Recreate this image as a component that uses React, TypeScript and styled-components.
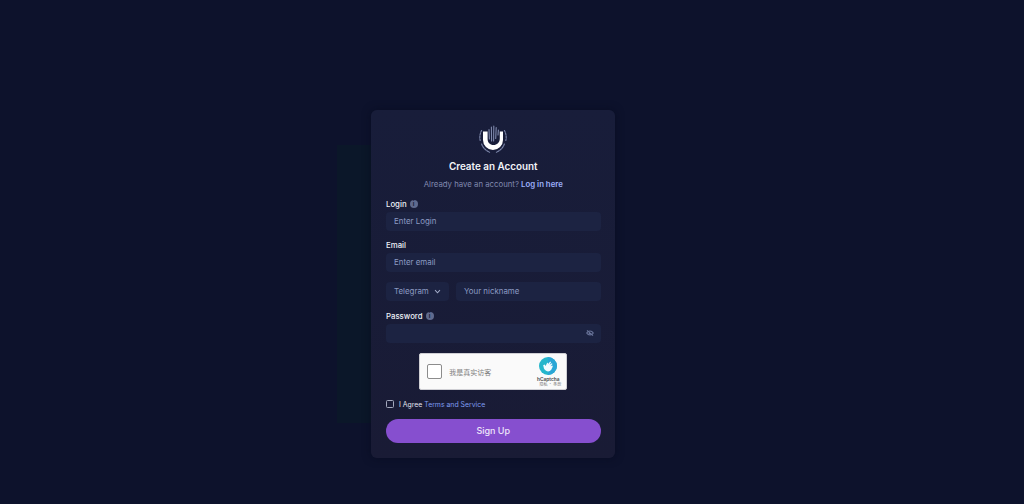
import React, { ReactElement } from 'react'
import styled, { createGlobalStyle } from 'styled-components'

const GlobalStyle = createGlobalStyle`
  html, body {
    margin: 0;
    padding: 0;
    height: 100%;
    background: #0d122c;
  }
  * {
    box-sizing: border-box;
  }
`

const Page = styled.div`
  position: relative;
  height: 504px;
  overflow: hidden;
  display: flex;
  justify-content: center;
  align-items: flex-start;
  padding: 110px 38px 0 0;
  font-family: Inter, 'Noto Sans', sans-serif;
`

const Glow = styled.div`
  position: absolute;
  left: 337px;
  top: 145px;
  width: 120px;
  height: 278px;
  background: #0b1729;
`

const Card = styled.div`
  position: relative;
  width: 244px;
  height: 348px;
  padding: 14px 14.5px 0 15px;
  background: linear-gradient(180deg, #181d3a 0%, #191b35 100%);
  border-radius: 6px;
  box-shadow: 0 0 8px rgb(6 9 28 / 55%);
  display: flex;
  flex-direction: column;
`

const LogoWrap = styled.div`
  display: flex;
  justify-content: center;
  height: 30px;
`

const Title = styled.h1`
  margin: 5px 0 0;
  font-size: 9.9px;
  line-height: 14px;
  font-weight: 600;
  color: #f2f3f8;
  text-align: center;
`

const Subtitle = styled.p`
  margin: 5px 0 0;
  font-size: 7.8px;
  line-height: 12px;
  color: #8089ae;
  text-align: center;
`

const Link = styled.a<{ $bold?: boolean }>`
  color: ${p => (p.$bold ? '#9cb0fa' : '#7f9cf0')};
  font-weight: ${p => (p.$bold ? 600 : 400)};
  text-decoration: none;
`

const Field = styled.div<{ $top: number }>`
  margin-top: ${p => p.$top}px;
`

const Label = styled.div`
  display: flex;
  align-items: center;
  gap: 3px;
  height: 11px;
  margin-bottom: 2px;
  font-size: 7.8px;
  font-weight: 500;
  color: #eef0f7;
`

const InfoDot = styled.span`
  width: 8px;
  height: 8px;
  border-radius: 50%;
  background: #5f6a8e;
  color: #181c38;
  font-size: 6px;
  font-weight: 700;
  line-height: 8px;
  text-align: center;
`

const Input = styled.div<{ $width?: number }>`
  flex: ${p => (p.$width ? `0 0 ${p.$width}px` : '1 1 auto')};
  height: 19.5px;
  padding: 0 8px;
  display: flex;
  align-items: center;
  justify-content: space-between;
  background: #1c2342;
  border-radius: 4px;
  font-size: 7.9px;
  color: #8d9bc2;
`

const EyeSlot = styled.span`
  display: flex;
  margin-right: -1px;
`

const ContactRow = styled.div`
  display: flex;
  gap: 7px;
  margin-top: 9.5px;
`

const CaptchaRow = styled.div`
  display: flex;
  justify-content: center;
  margin-top: 10px;
`

const Captcha = styled.div`
  width: 148px;
  height: 37px;
  padding: 0 5px 0 7px;
  display: flex;
  align-items: center;
  background: #fafafa;
  border: 1px solid #cfcfd4;
  border-radius: 2px;
`

const CaptchaBox = styled.div`
  width: 15px;
  height: 15px;
  background: #fff;
  border: 1px solid #8c8c8c;
  border-radius: 2px;
`

const CaptchaText = styled.span`
  margin-left: 7px;
  flex: 1;
  font-family: 'Noto Sans CJK SC', sans-serif;
  font-size: 7px;
  color: #808080;
`

const CaptchaBrand = styled.div`
  display: flex;
  flex-direction: column;
  align-items: center;
  width: 26px;
`

const BrandName = styled.span`
  margin-top: 1px;
  font-size: 4.8px;
  line-height: 6px;
  font-weight: 600;
  color: #444;
`

const BrandLinks = styled.span`
  align-self: flex-end;
  font-family: 'Noto Sans CJK SC', sans-serif;
  font-size: 4px;
  line-height: 5px;
  color: #777;
`

const AgreeRow = styled.label`
  display: flex;
  align-items: center;
  gap: 5px;
  margin-top: 8.5px;
  height: 11px;
  font-size: 6.9px;
  font-weight: 400;
  color: #e0e2ee;
`

const Check = styled.span`
  width: 8px;
  height: 8px;
  border: 1px solid #a4a9bd;
  border-radius: 1.5px;
`

const SubmitButton = styled.button`
  margin-top: 9.5px;
  width: 100%;
  height: 23.5px;
  padding: 0;
  border: none;
  border-radius: 12px;
  background: #864fcf;
  color: #eee6fa;
  font-family: inherit;
  font-size: 9px;
  font-weight: 500;
`

const Logo = (): ReactElement => (
  <svg width='30' height='30' viewBox='0 0 30 30' fill='none'>
    <g stroke='#7f89ad' strokeWidth='1.1' strokeLinecap='round'>
      <path d='M11 5.5 11.4 15M13.4 3l.2 14M15.8 2l-.2 15M18.2 3.5l-.5 11M20.4 6l-.4 5' />
      <path
        d='M3.6 6.5a14 14 0 0 0-1.4 10M26.4 6.5a14 14 0 0 1 1.4 10M3.6 20a14 14 0 0 0 8 8.2M26.4 20a14 14 0 0 1-8 8.2'
        strokeDasharray='1.8 1.1'
      />
    </g>
    <path
      d='M5 7.5V16a10 10 0 0 0 20 0V7.5h-3.2v7C21.8 18.5 19 21 15.5 21 12 21 9.6 18.5 9.6 15V7.5z'
      fill='#fff'
    />
  </svg>
)

const EyeOff = (): ReactElement => (
  <svg width='8' height='8' viewBox='0 0 24 24' fill='none' stroke='#69749a' strokeWidth='3.2'>
    <path d='M2 12s4-6 10-6 10 6 10 6-4 6-10 6-10-6-10-6z' />
    <path d='M3 4l18 16M9 12a3 3 0 0 0 6 0' />
  </svg>
)

const Chevron = (): ReactElement => (
  <svg width='7' height='7' viewBox='0 0 10 10' fill='none' stroke='#a3acc9' strokeWidth='1.5'>
    <path d='M1.5 3.2 5 6.8l3.5-3.6' />
  </svg>
)

const HCaptchaMark = (): ReactElement => (
  <svg width='18' height='18' viewBox='0 0 18 18'>
    <circle cx='9' cy='9' r='9' fill='#25b6cb' />
    <path d='M9 0a9 9 0 0 1 9 9 9 9 0 0 1-9 9z' fill='#2aa6d6' />
    <path
      transform='rotate(22 9 9)'
      d='M4.2 10 5.3 8.8l1.4 1 .3-3.6 1 .1.2 1.2L9.4 4l1 .4-.5 2.8 1.6-2.3.9.6-1 2.7 1.5-1.3.7.7-.2 3.6A4.2 4.2 0 0 1 9 14.2a4.5 4.5 0 0 1-2.8-1.4z'
      fill='#f2fbff'
    />
  </svg>
)

const App = (): ReactElement => (
  <Page>
    <GlobalStyle />
    <Glow />
    <Card>
      <LogoWrap>
        <Logo />
      </LogoWrap>
      <Title>Create an Account</Title>
      <Subtitle>
        Already have an account? <Link $bold>Log in here</Link>
      </Subtitle>

      <Field $top={8.5}>
        <Label>
          Login <InfoDot>i</InfoDot>
        </Label>
        <Input>Enter Login</Input>
      </Field>

      <Field $top={8.5}>
        <Label>Email</Label>
        <Input>Enter email</Input>
      </Field>

      <ContactRow>
        <Input $width={63}>
          Telegram <Chevron />
        </Input>
        <Input>Your nickname</Input>
      </ContactRow>

      <Field $top={9.5}>
        <Label>
          Password <InfoDot>i</InfoDot>
        </Label>
        <Input>
          <span />
          <EyeSlot>
            <EyeOff />
          </EyeSlot>
        </Input>
      </Field>

      <CaptchaRow>
        <Captcha>
          <CaptchaBox />
          <CaptchaText>我是真实访客</CaptchaText>
          <CaptchaBrand>
            <HCaptchaMark />
            <BrandName>hCaptcha</BrandName>
            <BrandLinks>隐私 · 条款</BrandLinks>
          </CaptchaBrand>
        </Captcha>
      </CaptchaRow>

      <AgreeRow>
        <Check />
        <span>
          I Agree <Link>Terms and Service</Link>
        </span>
      </AgreeRow>

      <SubmitButton>Sign Up</SubmitButton>
    </Card>
  </Page>
)

export default App
